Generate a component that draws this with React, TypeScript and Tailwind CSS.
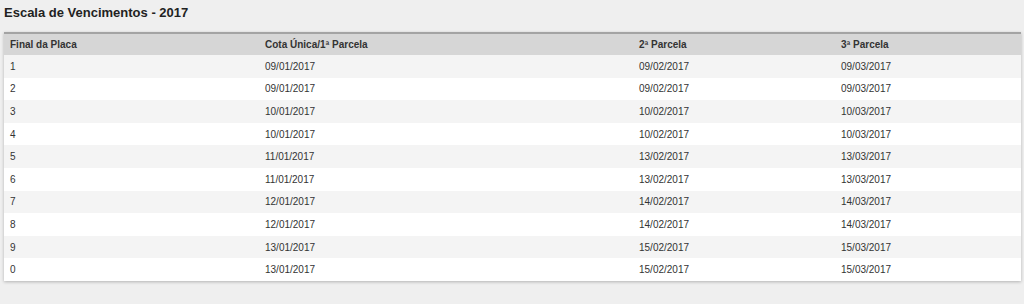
const rows = [
  ["1", "09/01/2017", "09/02/2017", "09/03/2017"],
  ["2", "09/01/2017", "09/02/2017", "09/03/2017"],
  ["3", "10/01/2017", "10/02/2017", "10/03/2017"],
  ["4", "10/01/2017", "10/02/2017", "10/03/2017"],
  ["5", "11/01/2017", "13/02/2017", "13/03/2017"],
  ["6", "11/01/2017", "13/02/2017", "13/03/2017"],
  ["7", "12/01/2017", "14/02/2017", "14/03/2017"],
  ["8", "12/01/2017", "14/02/2017", "14/03/2017"],
  ["9", "13/01/2017", "15/02/2017", "15/03/2017"],
  ["0", "13/01/2017", "15/02/2017", "15/03/2017"],
];

const cols = "grid grid-cols-[255px_374px_202px_1fr]";

export default function App() {
  return (
    <div className="min-h-[304px] bg-[#efefef] px-1 pt-[4px] font-['Liberation_Sans',Arial,sans-serif] text-[#333]">
      <h2 className="h-[18px] text-[13px] font-bold leading-[18px] text-[#222]">Escala de Vencimentos - 2017</h2>
      <div className="mt-[10px] mr-[-1px] bg-white shadow-[0_1px_3px_rgba(0,0,0,0.25)]">
        <div className={`${cols} h-[23px] items-center border-t-2 border-[#a3a3a3] bg-[#d6d6d6] text-[10px] font-bold`}>
          <div className="pl-[6px]">Final da Placa</div>
          <div className="pl-[6px]">Cota Única/1ª Parcela</div>
          <div className="pl-[6px]">2ª Parcela</div>
          <div className="pl-[6px]">3ª Parcela</div>
        </div>
        {rows.map((r, i) => (
          <div
            key={i}
            className={`${cols} h-[22.6px] items-center text-[10px] ${i % 2 === 0 ? "bg-[#f4f4f4]" : "bg-white"}`}
          >
            {r.map((c, j) => (
              <div key={j} className="pl-[6px]">
                {c}
              </div>
            ))}
          </div>
        ))}
      </div>
    </div>
  );
}
